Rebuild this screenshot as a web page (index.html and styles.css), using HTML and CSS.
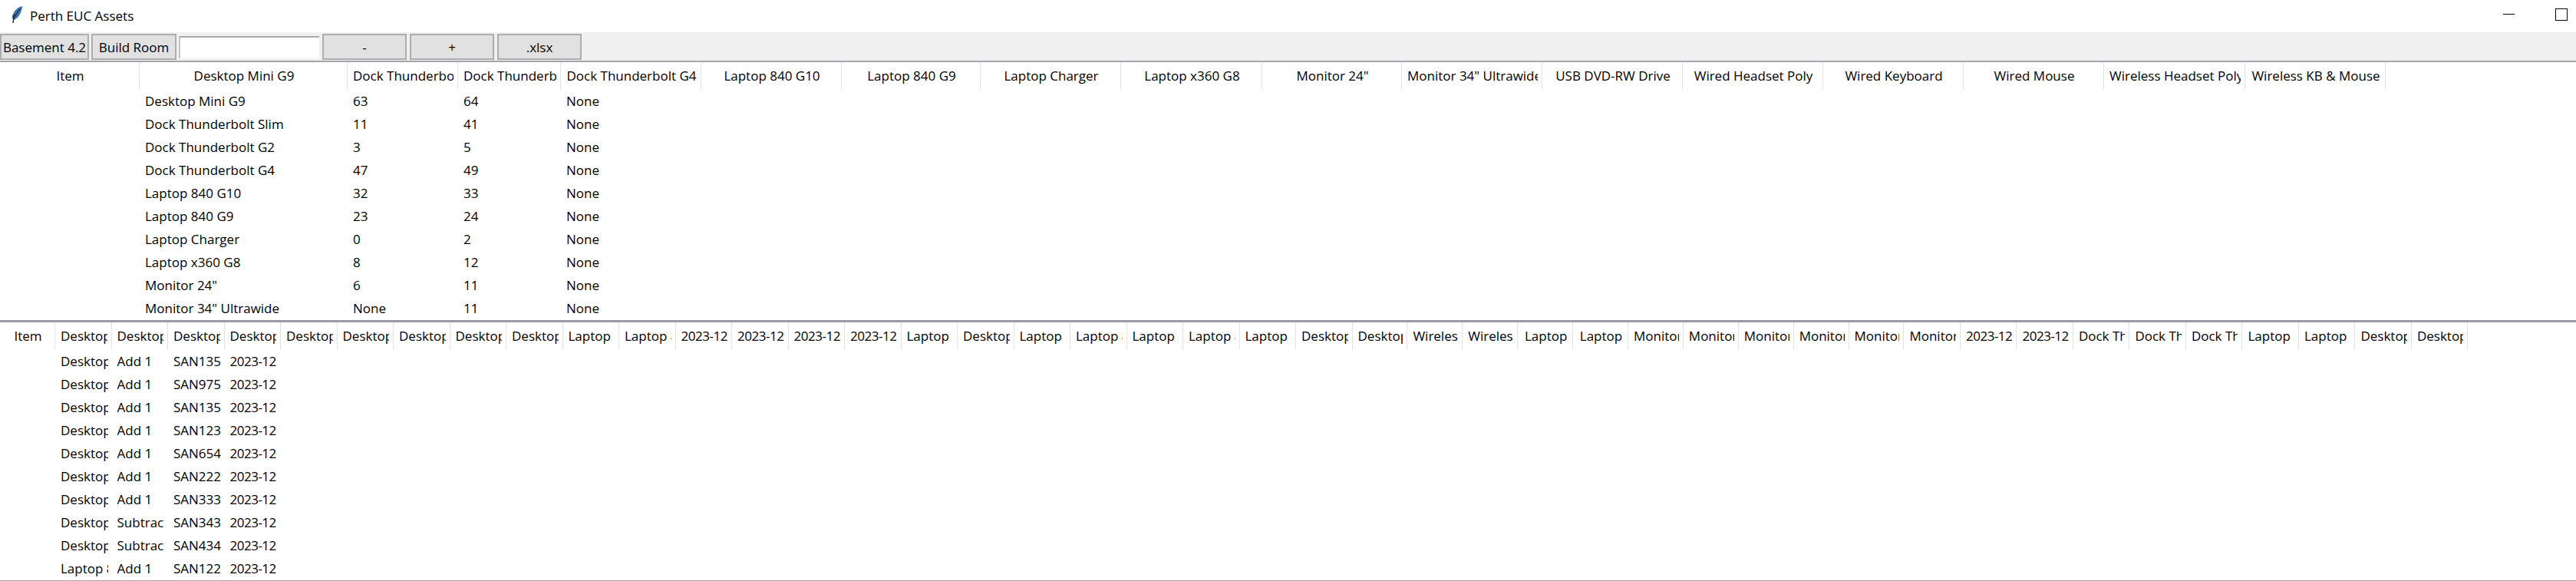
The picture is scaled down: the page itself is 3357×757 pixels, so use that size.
FILE: index.html
```html
<!DOCTYPE html>
<html lang="en">
<head>
    <meta charset="UTF-8">
    <title>Perth EUC Assets</title>
    <link rel="stylesheet" href="styles.css">
</head>
<body>

    <div class="titlebar">
        <svg class="feather" width="16" height="24" viewBox="0 0 16 24">
            <path d="M15 1C9 2 4 7 2.500 13C2 16 2.500 18 3.500 19C8 18 12 13 13.500 8C14.500 5 15 3 15 1Z" fill="#3f78b5"/>
            <path d="M13 4C9 8 5.500 13 3.500 19L3 23" fill="none" stroke="#22364d" stroke-width="1.500"/>
            <path d="M2.500 13C2 16 2.500 18 3.500 19C5 15 6 13 7 11C5 11 3.500 12 2.500 13Z" fill="#2b3d52"/>
        </svg>
        <span class="title">Perth EUC Assets</span>
        <div class="controls">
            <div class="minimize"></div>
            <div class="maximize"></div>
        </div>
    </div>

    <div class="toolbar">
        <button class="boton boton-basement">Basement 4.2</button>
        <button class="boton boton-build">Build Room</button>
        <input class="entrada" type="text">
        <button class="boton boton-ancho">-</button>
        <button class="boton boton-ancho">+</button>
        <button class="boton boton-ancho">.xlsx</button>
    </div>

    <div class="tabla tabla-resumen">
        <div class="fila cabecera">
            <div class="th"><span>Item</span></div>
            <div class="th"><span>Desktop Mini G9</span></div>
            <div class="th"><span>Dock Thunderbolt</span></div>
            <div class="th"><span>Dock Thunderbo</span></div>
            <div class="th"><span>Dock Thunderbolt G4</span></div>
            <div class="th"><span>Laptop 840 G10</span></div>
            <div class="th"><span>Laptop 840 G9</span></div>
            <div class="th"><span>Laptop Charger</span></div>
            <div class="th"><span>Laptop x360 G8</span></div>
            <div class="th"><span>Monitor 24"</span></div>
            <div class="th"><span>Monitor 34" Ultrawide</span></div>
            <div class="th"><span>USB DVD-RW Drive</span></div>
            <div class="th"><span>Wired Headset Poly</span></div>
            <div class="th"><span>Wired Keyboard</span></div>
            <div class="th"><span>Wired Mouse</span></div>
            <div class="th"><span>Wireless Headset Poly</span></div>
            <div class="th"><span>Wireless KB &amp; Mouse</span></div>
        </div>
        <div class="fila"><div class="td"></div><div class="td">Desktop Mini G9</div><div class="td">63</div><div class="td">64</div><div class="td">None</div></div>
        <div class="fila"><div class="td"></div><div class="td">Dock Thunderbolt Slim</div><div class="td">11</div><div class="td">41</div><div class="td">None</div></div>
        <div class="fila"><div class="td"></div><div class="td">Dock Thunderbolt G2</div><div class="td">3</div><div class="td">5</div><div class="td">None</div></div>
        <div class="fila"><div class="td"></div><div class="td">Dock Thunderbolt G4</div><div class="td">47</div><div class="td">49</div><div class="td">None</div></div>
        <div class="fila"><div class="td"></div><div class="td">Laptop 840 G10</div><div class="td">32</div><div class="td">33</div><div class="td">None</div></div>
        <div class="fila"><div class="td"></div><div class="td">Laptop 840 G9</div><div class="td">23</div><div class="td">24</div><div class="td">None</div></div>
        <div class="fila"><div class="td"></div><div class="td">Laptop Charger</div><div class="td">0</div><div class="td">2</div><div class="td">None</div></div>
        <div class="fila"><div class="td"></div><div class="td">Laptop x360 G8</div><div class="td">8</div><div class="td">12</div><div class="td">None</div></div>
        <div class="fila"><div class="td"></div><div class="td">Monitor 24"</div><div class="td">6</div><div class="td">11</div><div class="td">None</div></div>
        <div class="fila"><div class="td"></div><div class="td">Monitor 34" Ultrawide</div><div class="td">None</div><div class="td">11</div><div class="td">None</div></div>
    </div>

    <div class="separador"></div>

    <div class="tabla tabla-movimientos">
        <div class="fila cabecera">
            <div class="th"><span>Item</span></div>
            <div class="th"><span>Desktop</span></div>
            <div class="th"><span>Desktop</span></div>
            <div class="th"><span>Desktop</span></div>
            <div class="th"><span>Desktop</span></div>
            <div class="th"><span>Desktop</span></div>
            <div class="th"><span>Desktop</span></div>
            <div class="th"><span>Desktop</span></div>
            <div class="th"><span>Desktop</span></div>
            <div class="th"><span>Desktop</span></div>
            <div class="th"><span>Laptop 8</span></div>
            <div class="th"><span>Laptop 8</span></div>
            <div class="th fecha"><span>2023-12</span></div>
            <div class="th fecha"><span>2023-12</span></div>
            <div class="th fecha"><span>2023-12</span></div>
            <div class="th fecha"><span>2023-12</span></div>
            <div class="th"><span>Laptop 8</span></div>
            <div class="th"><span>Desktop</span></div>
            <div class="th"><span>Laptop 8</span></div>
            <div class="th"><span>Laptop 8</span></div>
            <div class="th"><span>Laptop 8</span></div>
            <div class="th"><span>Laptop 8</span></div>
            <div class="th"><span>Laptop 8</span></div>
            <div class="th"><span>Desktop</span></div>
            <div class="th"><span>Desktop</span></div>
            <div class="th"><span>Wireless</span></div>
            <div class="th"><span>Wireless</span></div>
            <div class="th"><span>Laptop</span></div>
            <div class="th"><span>Laptop</span></div>
            <div class="th"><span>Monitor</span></div>
            <div class="th"><span>Monitor</span></div>
            <div class="th"><span>Monitor</span></div>
            <div class="th"><span>Monitor</span></div>
            <div class="th"><span>Monitor</span></div>
            <div class="th"><span>Monitor</span></div>
            <div class="th fecha"><span>2023-12</span></div>
            <div class="th fecha"><span>2023-12</span></div>
            <div class="th"><span>Dock Th</span></div>
            <div class="th"><span>Dock Th</span></div>
            <div class="th"><span>Dock Th</span></div>
            <div class="th"><span>Laptop 8</span></div>
            <div class="th"><span>Laptop 8</span></div>
            <div class="th"><span>Desktop</span></div>
            <div class="th"><span>Desktop</span></div>
        </div>
        <div class="fila"><div class="td"></div><div class="td">Desktop</div><div class="td">Add 1</div><div class="td">SAN135</div><div class="td fecha">2023-12</div></div>
        <div class="fila"><div class="td"></div><div class="td">Desktop</div><div class="td">Add 1</div><div class="td">SAN975</div><div class="td fecha">2023-12</div></div>
        <div class="fila"><div class="td"></div><div class="td">Desktop</div><div class="td">Add 1</div><div class="td">SAN135</div><div class="td fecha">2023-12</div></div>
        <div class="fila"><div class="td"></div><div class="td">Desktop</div><div class="td">Add 1</div><div class="td">SAN123</div><div class="td fecha">2023-12</div></div>
        <div class="fila"><div class="td"></div><div class="td">Desktop</div><div class="td">Add 1</div><div class="td">SAN654</div><div class="td fecha">2023-12</div></div>
        <div class="fila"><div class="td"></div><div class="td">Desktop</div><div class="td">Add 1</div><div class="td">SAN222</div><div class="td fecha">2023-12</div></div>
        <div class="fila"><div class="td"></div><div class="td">Desktop</div><div class="td">Add 1</div><div class="td">SAN333</div><div class="td fecha">2023-12</div></div>
        <div class="fila"><div class="td"></div><div class="td">Desktop</div><div class="td">Subtract</div><div class="td">SAN343</div><div class="td fecha">2023-12</div></div>
        <div class="fila"><div class="td"></div><div class="td">Desktop</div><div class="td">Subtract</div><div class="td">SAN434</div><div class="td fecha">2023-12</div></div>
        <div class="fila"><div class="td"></div><div class="td">Laptop 8</div><div class="td">Add 1</div><div class="td">SAN122</div><div class="td fecha">2023-12</div></div>
    </div>

</body>
</html>
```

FILE: styles.css
```css
body {
    font-family: "Open Sans", "Noto Sans", sans-serif;
    font-size: 17px;
    color: #000;
    background-color: #fff;
    margin: 0;
    height: 757px;
    overflow: hidden;
    display: flex;
    flex-direction: column;
}

.titlebar {
    height: 42px;
    display: flex;
    align-items: center;
    padding-left: 14px;
    flex-shrink: 0;
}

.feather {
    margin-right: 9px;
    margin-top: -5px;
}

.title {
    font-size: 17px;
    margin-top: -2px;
}

.controls {
    margin-left: auto;
    display: flex;
    align-items: center;
    gap: 53px;
    padding: 0 11px 5px 0;
}

.minimize {
    width: 15px;
    height: 1px;
    background-color: #000;
}

.maximize {
    width: 14px;
    height: 14px;
    border: 1px solid #000;
}

.toolbar {
    background-color: #f0f0f0;
    border-bottom: 2px solid #a4a6ab;
    display: flex;
    align-items: flex-start;
    gap: 3px;
    padding-top: 2px;
    box-sizing: border-box;
    height: 39px;
    flex-shrink: 0;
}

.boton {
    height: 34px;
    padding: 0;
    background-color: #e1e1e1;
    border: 2px solid #adadad;
    font-family: inherit;
    font-size: 17px;
    color: #000;
}

.boton-basement {
    width: 116px;
}

.boton-build {
    width: 111px;
}

.boton-ancho {
    width: 110px;
    margin-right: 1px;
}

.entrada {
    width: 183px;
    height: 29px;
    margin: 3px 1px 0 0;
    padding: 0;
    border: none;
    border-top: 2px solid #a9a9a9;
    border-left: 2px solid #c4c4c4;
    box-sizing: border-box;
    background-color: #fff;
}

.fila {
    display: grid;
    height: 30px;
}

.tabla-resumen .fila {
    grid-template-columns: 182px 271px 144px 134px 183px 183px 181px 183px 184px 182px 183px 183px 183px 183px 183px 184px 183px;
}

.tabla-movimientos .fila {
    grid-template-columns: 72px repeat(23, 73.5px) repeat(10, 71.9px) repeat(10, 73.5px);
}

.fila.cabecera {
    height: 36px;
}

.th {
    border-right: 1px solid #e3e3e3;
    line-height: 36px;
    text-align: center;
    min-width: 0;
}

.th span {
    display: block;
    margin: 0 5px 0 7px;
    overflow: hidden;
    white-space: nowrap;
}

.td {
    margin: 0 5px 0 7px;
    line-height: 30px;
    overflow: hidden;
    white-space: nowrap;
    min-width: 0;
}

.fecha {
    letter-spacing: -0.5px;
}

.separador {
    height: 3px;
    background-color: #9a9ca3;
    flex-shrink: 0;
}

.tabla-movimientos {
    flex: 1;
    border-bottom: 1px solid #a9a9a9;
    box-sizing: border-box;
}
```
